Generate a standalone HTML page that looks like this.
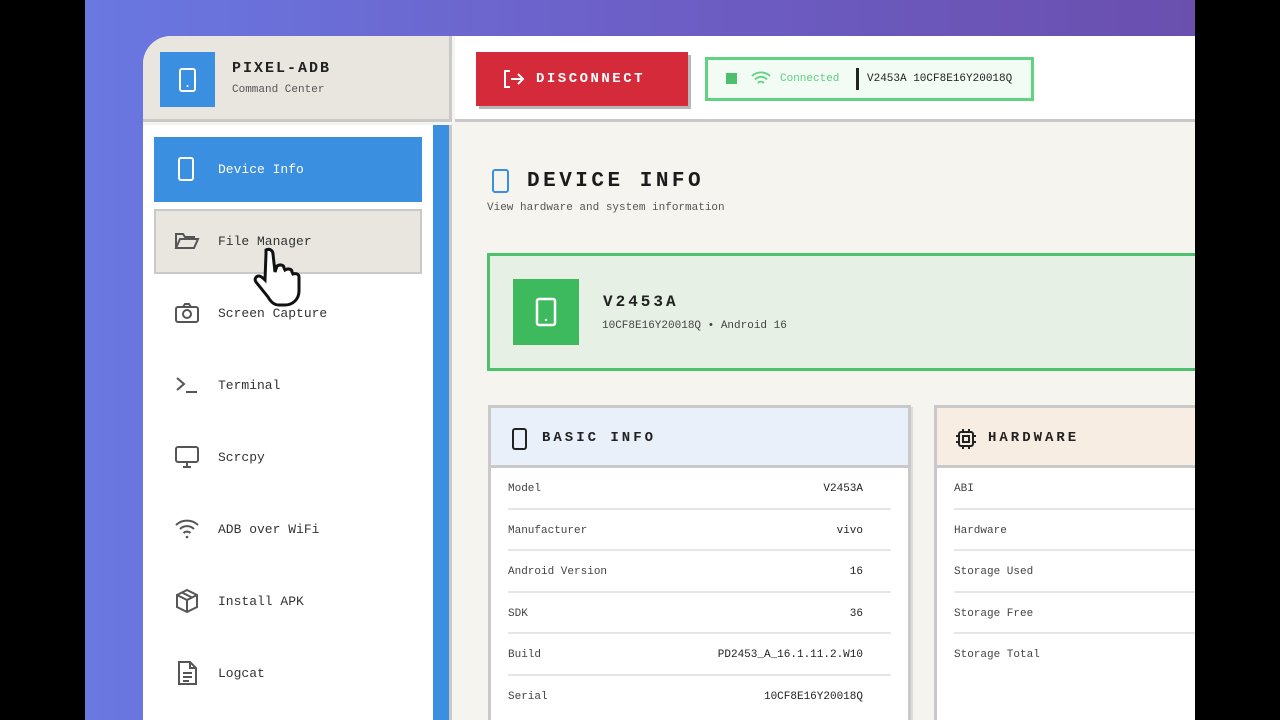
<!DOCTYPE html>
<html><head><meta charset="utf-8"><style>
*{box-sizing:border-box;margin:0;padding:0}
body{width:1280px;height:720px;overflow:hidden;background:#000;position:relative;font-family:"Liberation Mono",monospace}
.bg{position:absolute;left:85px;top:0;width:1110px;height:720px;background:linear-gradient(90deg,#6a78e2,#6c5fc6 50%,#6a4fae)}
.win{position:absolute;left:143px;top:36px;width:1052px;height:684px;background:#f6f4ef;border-top-left-radius:28px;overflow:hidden}
.sh{position:absolute;left:0;top:0;width:309px;height:86px;background:#e8e6df;border-bottom:3px solid #c9c9c9;border-right:3px solid #c9c9c9}
.logo{position:absolute;left:17px;top:16px;width:55px;height:55px;background:#3a8fe0}
.t1{position:absolute;left:89px;top:24px;font:bold 15px "Liberation Mono",monospace;letter-spacing:2px;color:#222}
.t2{position:absolute;left:89px;top:48px;font-size:11px;color:#555}
.side{position:absolute;left:0;top:89px;width:309px;height:600px;background:#fff;border-right:3px solid #c9c9c9}
.scroll{position:absolute;left:290px;top:0;width:16px;height:600px;background:#3a8fe0}
.nav{position:absolute;left:11px;width:268px;height:65px;font-size:13px;color:#333}
.nav span{position:absolute;left:64px;top:25px}
.nav svg{position:absolute;left:20px;top:19px}
.top{position:absolute;left:312px;top:0;width:740px;height:86px;background:#fff;border-bottom:3px solid #c9c9c9}
.disc{position:absolute;left:21px;top:16px;width:212px;height:54px;background:#d42a3a;box-shadow:3px 3px 0 #b8b8b8;color:#fff;font:bold 14px "Liberation Mono",monospace;letter-spacing:2.5px}
.stat{position:absolute;left:250px;top:21px;width:329px;height:44px;border:3px solid #5fd37f;background:#f2fbf4;font-size:11px}
.main{position:absolute;left:312px;top:89px;width:740px;height:600px}
.h1{position:absolute;left:72px;top:45px;font:bold 21px "Liberation Mono",monospace;letter-spacing:3.5px;color:#1c1c1c;white-space:nowrap}
.sub{position:absolute;left:32px;top:77px;font-size:11px;color:#555;white-space:nowrap}
.green{position:absolute;left:32px;top:128px;width:720px;height:118px;border:3px solid #4cc06a;background:#e6f0e4}
.card{position:absolute;top:280px;height:320px;border:3px solid #c9c9c9;background:#fff;box-shadow:2px 2px 0 #ddd}
.ch{height:60px;border-bottom:3px solid #c9c9c9;position:relative}
.ch b{position:absolute;left:51px;top:22px;font:bold 14px "Liberation Mono",monospace;letter-spacing:3px;color:#222}
.row{position:relative;height:41.5px;margin:0 17px;border-bottom:2px solid #e6e6e6;font-size:11px;color:#444;white-space:nowrap}
.row span{position:absolute;top:15px}
.row .v{right:28px;color:#222}
</style></head><body>
<div class="bg"></div>
<div class="win">
 <div class="sh">
  <div class="logo"><svg width="55" height="55"><rect x="20" y="17" width="15" height="22" rx="2" fill="none" stroke="#fff" stroke-width="2"/><circle cx="27.5" cy="34" r="1" fill="#fff"/></svg></div>
  <div class="t1">PIXEL-ADB</div><div class="t2">Command Center</div>
 </div>
 <div class="side">
  <div class="scroll"></div>
  <div class="nav" style="top:12px;background:#3a8fe0;color:#fff"><svg width="24" height="26"><rect x="5" y="2" width="14" height="22" rx="2" fill="none" stroke="#fff" stroke-width="2"/></svg><span>Device Info</span></div>
  <div class="nav" style="top:84px;background:#e8e6df;border:2px solid #c9c9c9"><svg style="left:18px;top:17px" width="26" height="26"><path d="M2 20V6h7l2 3h9v3M2 20l4-9h18l-4 9z" fill="none" stroke="#555" stroke-width="2"/></svg><span style="left:62px;top:23px">File Manager</span></div>
  <div class="nav" style="top:156px"><svg width="26" height="26"><rect x="2" y="7" width="22" height="15" rx="2" fill="none" stroke="#555" stroke-width="2"/><circle cx="13" cy="14" r="4" fill="none" stroke="#555" stroke-width="2"/><path d="M9 7l2-3h4l2 3" fill="none" stroke="#555" stroke-width="2"/></svg><span>Screen Capture</span></div>
  <div class="nav" style="top:228px"><svg width="26" height="26"><path d="M3 6l7 6-7 6M12 20h11" fill="none" stroke="#555" stroke-width="2"/></svg><span>Terminal</span></div>
  <div class="nav" style="top:300px"><svg width="26" height="26"><rect x="2" y="3" width="22" height="15" rx="2" fill="none" stroke="#555" stroke-width="2"/><path d="M9 23h8M13 18v5" stroke="#555" stroke-width="2"/></svg><span>Scrcpy</span></div>
  <div class="nav" style="top:372px"><svg width="26" height="26"><path d="M2 9a16 16 0 0 1 22 0M6 13a10 10 0 0 1 14 0M9.5 17a5 5 0 0 1 7 0" fill="none" stroke="#555" stroke-width="2"/><circle cx="13" cy="21" r="1.3" fill="#555"/></svg><span>ADB over WiFi</span></div>
  <div class="nav" style="top:444px"><svg width="26" height="26"><path d="M13 2l10 5v12l-10 5-10-5V7zM3 7l10 5 10-5M13 12v12M8 4.5l10 5" fill="none" stroke="#555" stroke-width="2"/></svg><span>Install APK</span></div>
  <div class="nav" style="top:516px"><svg width="26" height="26"><path d="M5 2h11l6 6v16H5zM16 2v6h6M9 13h9M9 17h9M9 21h6" fill="none" stroke="#555" stroke-width="2"/></svg><span>Logcat</span></div>
 </div>
 <div class="top">
  <div class="disc"><svg style="position:absolute;left:26px;top:17px" width="24" height="20"><path d="M8 2H3v16h5M9 10h12M16 5l5 5-5 5" fill="none" stroke="#fff" stroke-width="2"/></svg><span style="position:absolute;left:60px;top:19px">DISCONNECT</span></div>
  <div class="stat">
   <div style="position:absolute;left:18px;top:13px;width:11px;height:11px;background:#4cc06a"></div>
   <svg style="position:absolute;left:42px;top:9px" width="22" height="18"><path d="M2 7a13 13 0 0 1 18 0M5 10.5a8 8 0 0 1 12 0M8 14a4 4 0 0 1 6 0" fill="none" stroke="#5fd37f" stroke-width="1.8"/></svg>
   <span style="position:absolute;left:72px;top:13px;color:#5fcf80">Connected</span>
   <div style="position:absolute;left:148px;top:8px;width:3px;height:22px;background:#222"></div>
   <span style="position:absolute;left:159px;top:13px;color:#222">V2453A 10CF8E16Y20018Q</span>
  </div>
 </div>
 <div class="main">
  <svg style="position:absolute;left:36px;top:43px" width="20" height="26"><rect x="2" y="2" width="15" height="22" rx="2" fill="none" stroke="#3a8fe0" stroke-width="2"/></svg>
  <div class="h1">DEVICE INFO</div>
  <div class="sub">View hardware and system information</div>
  <div class="green">
   <div style="position:absolute;left:23px;top:23px;width:66px;height:66px;background:#3dba5e"><svg width="66" height="66"><rect x="24" y="20" width="18" height="26" rx="2" fill="none" stroke="#fff" stroke-width="2.5"/><circle cx="33" cy="41" r="1.2" fill="#fff"/></svg></div>
   <div style="position:absolute;left:113px;top:37px;font:bold 16px 'Liberation Mono',monospace;letter-spacing:3px;color:#222">V2453A</div>
   <div style="position:absolute;left:112px;top:64px;font-size:11px;color:#444">10CF8E16Y20018Q • Android 16</div>
  </div>
  <div class="card" style="left:33px;width:423px">
   <div class="ch" style="background:#e9f0fa"><svg style="position:absolute;left:20px;top:20px" width="18" height="22"><rect x="2" y="1" width="13" height="20" rx="2" fill="none" stroke="#222" stroke-width="2"/></svg><b>BASIC INFO</b></div>
   <div class="row"><span>Model</span><span class="v">V2453A</span></div>
   <div class="row"><span>Manufacturer</span><span class="v">vivo</span></div>
   <div class="row"><span>Android Version</span><span class="v">16</span></div>
   <div class="row"><span>SDK</span><span class="v">36</span></div>
   <div class="row"><span>Build</span><span class="v">PD2453_A_16.1.11.2.W10</span></div>
   <div class="row" style="border:0"><span>Serial</span><span class="v">10CF8E16Y20018Q</span></div>
  </div>
  <div class="card" style="left:479px;width:300px">
   <div class="ch" style="background:#f8ede3"><svg style="position:absolute;left:18px;top:20px" width="22" height="22"><rect x="4" y="4" width="14" height="14" rx="2" fill="none" stroke="#222" stroke-width="2"/><rect x="8" y="8" width="6" height="6" fill="none" stroke="#222" stroke-width="2"/><path d="M8 1v3M14 1v3M8 18v3M14 18v3M1 8h3M1 14h3M18 8h3M18 14h3" stroke="#222" stroke-width="2"/></svg><b>HARDWARE</b></div>
   <div class="row"><span>ABI</span></div>
   <div class="row"><span>Hardware</span></div>
   <div class="row"><span>Storage Used</span></div>
   <div class="row"><span>Storage Free</span></div>
   <div class="row" style="border:0"><span>Storage Total</span></div>
  </div>
 </div>
</div>
<svg style="position:absolute;left:250px;top:246px" width="72" height="72"><path d="M16 4c4-2 7 1 7 4l2 18 2-6c3-2 7-1 7 2l1 2c3-2 7-1 7 2l1 2c3-1 6 0 6 3v14c0 8-6 14-14 14h-6c-5 0-8-3-11-8L6 36c-2-3 0-6 3-6 2 0 4 2 6 4l1-26z" fill="#fff" stroke="#111" stroke-width="3"/></svg>
</body></html>
